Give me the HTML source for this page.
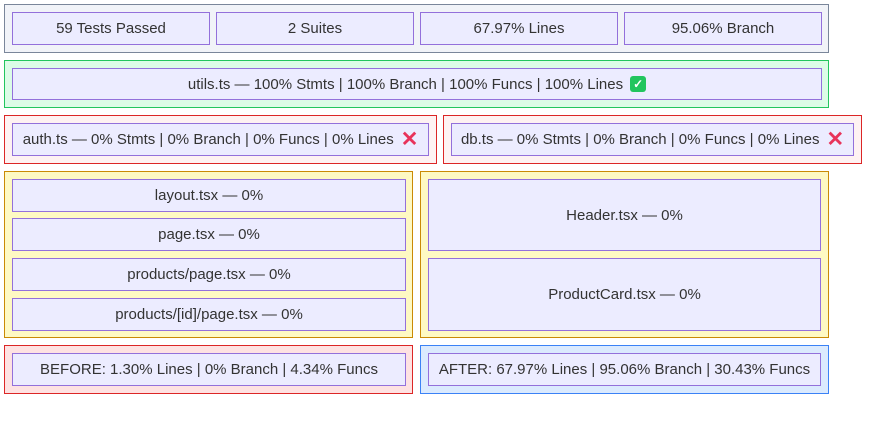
<!DOCTYPE html><html><head><style>
body{margin:0;width:873px;height:446px;background:#fff;position:relative;font-family:"Liberation Sans",sans-serif;font-size:15px;color:#333;overflow:hidden}
div{position:absolute;box-sizing:border-box}
.o{border:1px solid}
.i{background:#ececff;border:1px solid #9370db;display:flex;align-items:center;justify-content:center;white-space:nowrap}
.g{background:#f1f3f8;border-color:#7a869a}
.gr{background:#dcfce7;border-color:#22c55e}
.r{background:#fef2f2;border-color:#dc2626}
.y{background:#fef9c3;border-color:#ca8a04}
.rr{background:#fee2e2;border-color:#dc2626}
.b{background:#dbeafe;border-color:#3b82f6}
.x{color:#e8335a;font-weight:bold;font-size:21px;margin-left:7px;line-height:1}
.c{display:inline-block;width:16px;height:16px;background:#22c55e;border-radius:3px;color:#fff;font-size:12px;line-height:16px;text-align:center;margin-left:7px;font-weight:bold}
</style></head><body>
<div class="o g" style="left:4px;top:4px;width:825px;height:49px"></div>
<div class="i" style="left:12px;top:12px;width:198px;height:33px">59 Tests Passed</div>
<div class="i" style="left:216px;top:12px;width:198px;height:33px">2 Suites</div>
<div class="i" style="left:420px;top:12px;width:198px;height:33px">67.97% Lines</div>
<div class="i" style="left:624px;top:12px;width:198px;height:33px">95.06% Branch</div>

<div class="o gr" style="left:4px;top:60px;width:825px;height:48px"></div>
<div class="i" style="left:12px;top:68px;width:810px;height:32px">utils.ts — 100% Stmts | 100% Branch | 100% Funcs | 100% Lines <span class="c">✓</span></div>

<div class="o r" style="left:4px;top:115px;width:433px;height:49px"></div>
<div class="i" style="left:12px;top:123px;width:417px;height:33px">auth.ts — 0% Stmts | 0% Branch | 0% Funcs | 0% Lines <span class="x">✕</span></div>
<div class="o r" style="left:443px;top:115px;width:419px;height:49px"></div>
<div class="i" style="left:451px;top:123px;width:403px;height:33px">db.ts — 0% Stmts | 0% Branch | 0% Funcs | 0% Lines <span class="x">✕</span></div>

<div class="o y" style="left:4px;top:171px;width:409px;height:167px"></div>
<div class="i" style="left:12px;top:179px;width:394px;height:33px">layout.tsx — 0%</div>
<div class="i" style="left:12px;top:218px;width:394px;height:33px">page.tsx — 0%</div>
<div class="i" style="left:12px;top:258px;width:394px;height:33px">products/page.tsx — 0%</div>
<div class="i" style="left:12px;top:298px;width:394px;height:33px">products/[id]/page.tsx — 0%</div>
<div class="o y" style="left:420px;top:171px;width:409px;height:167px"></div>
<div class="i" style="left:428px;top:179px;width:393px;height:72px">Header.tsx — 0%</div>
<div class="i" style="left:428px;top:258px;width:393px;height:73px">ProductCard.tsx — 0%</div>

<div class="o rr" style="left:4px;top:345px;width:409px;height:49px"></div>
<div class="i" style="left:12px;top:353px;width:394px;height:33px">BEFORE: 1.30% Lines | 0% Branch | 4.34% Funcs</div>
<div class="o b" style="left:420px;top:345px;width:409px;height:49px"></div>
<div class="i" style="left:428px;top:353px;width:393px;height:33px">AFTER: 67.97% Lines | 95.06% Branch | 30.43% Funcs</div>
</body></html>
